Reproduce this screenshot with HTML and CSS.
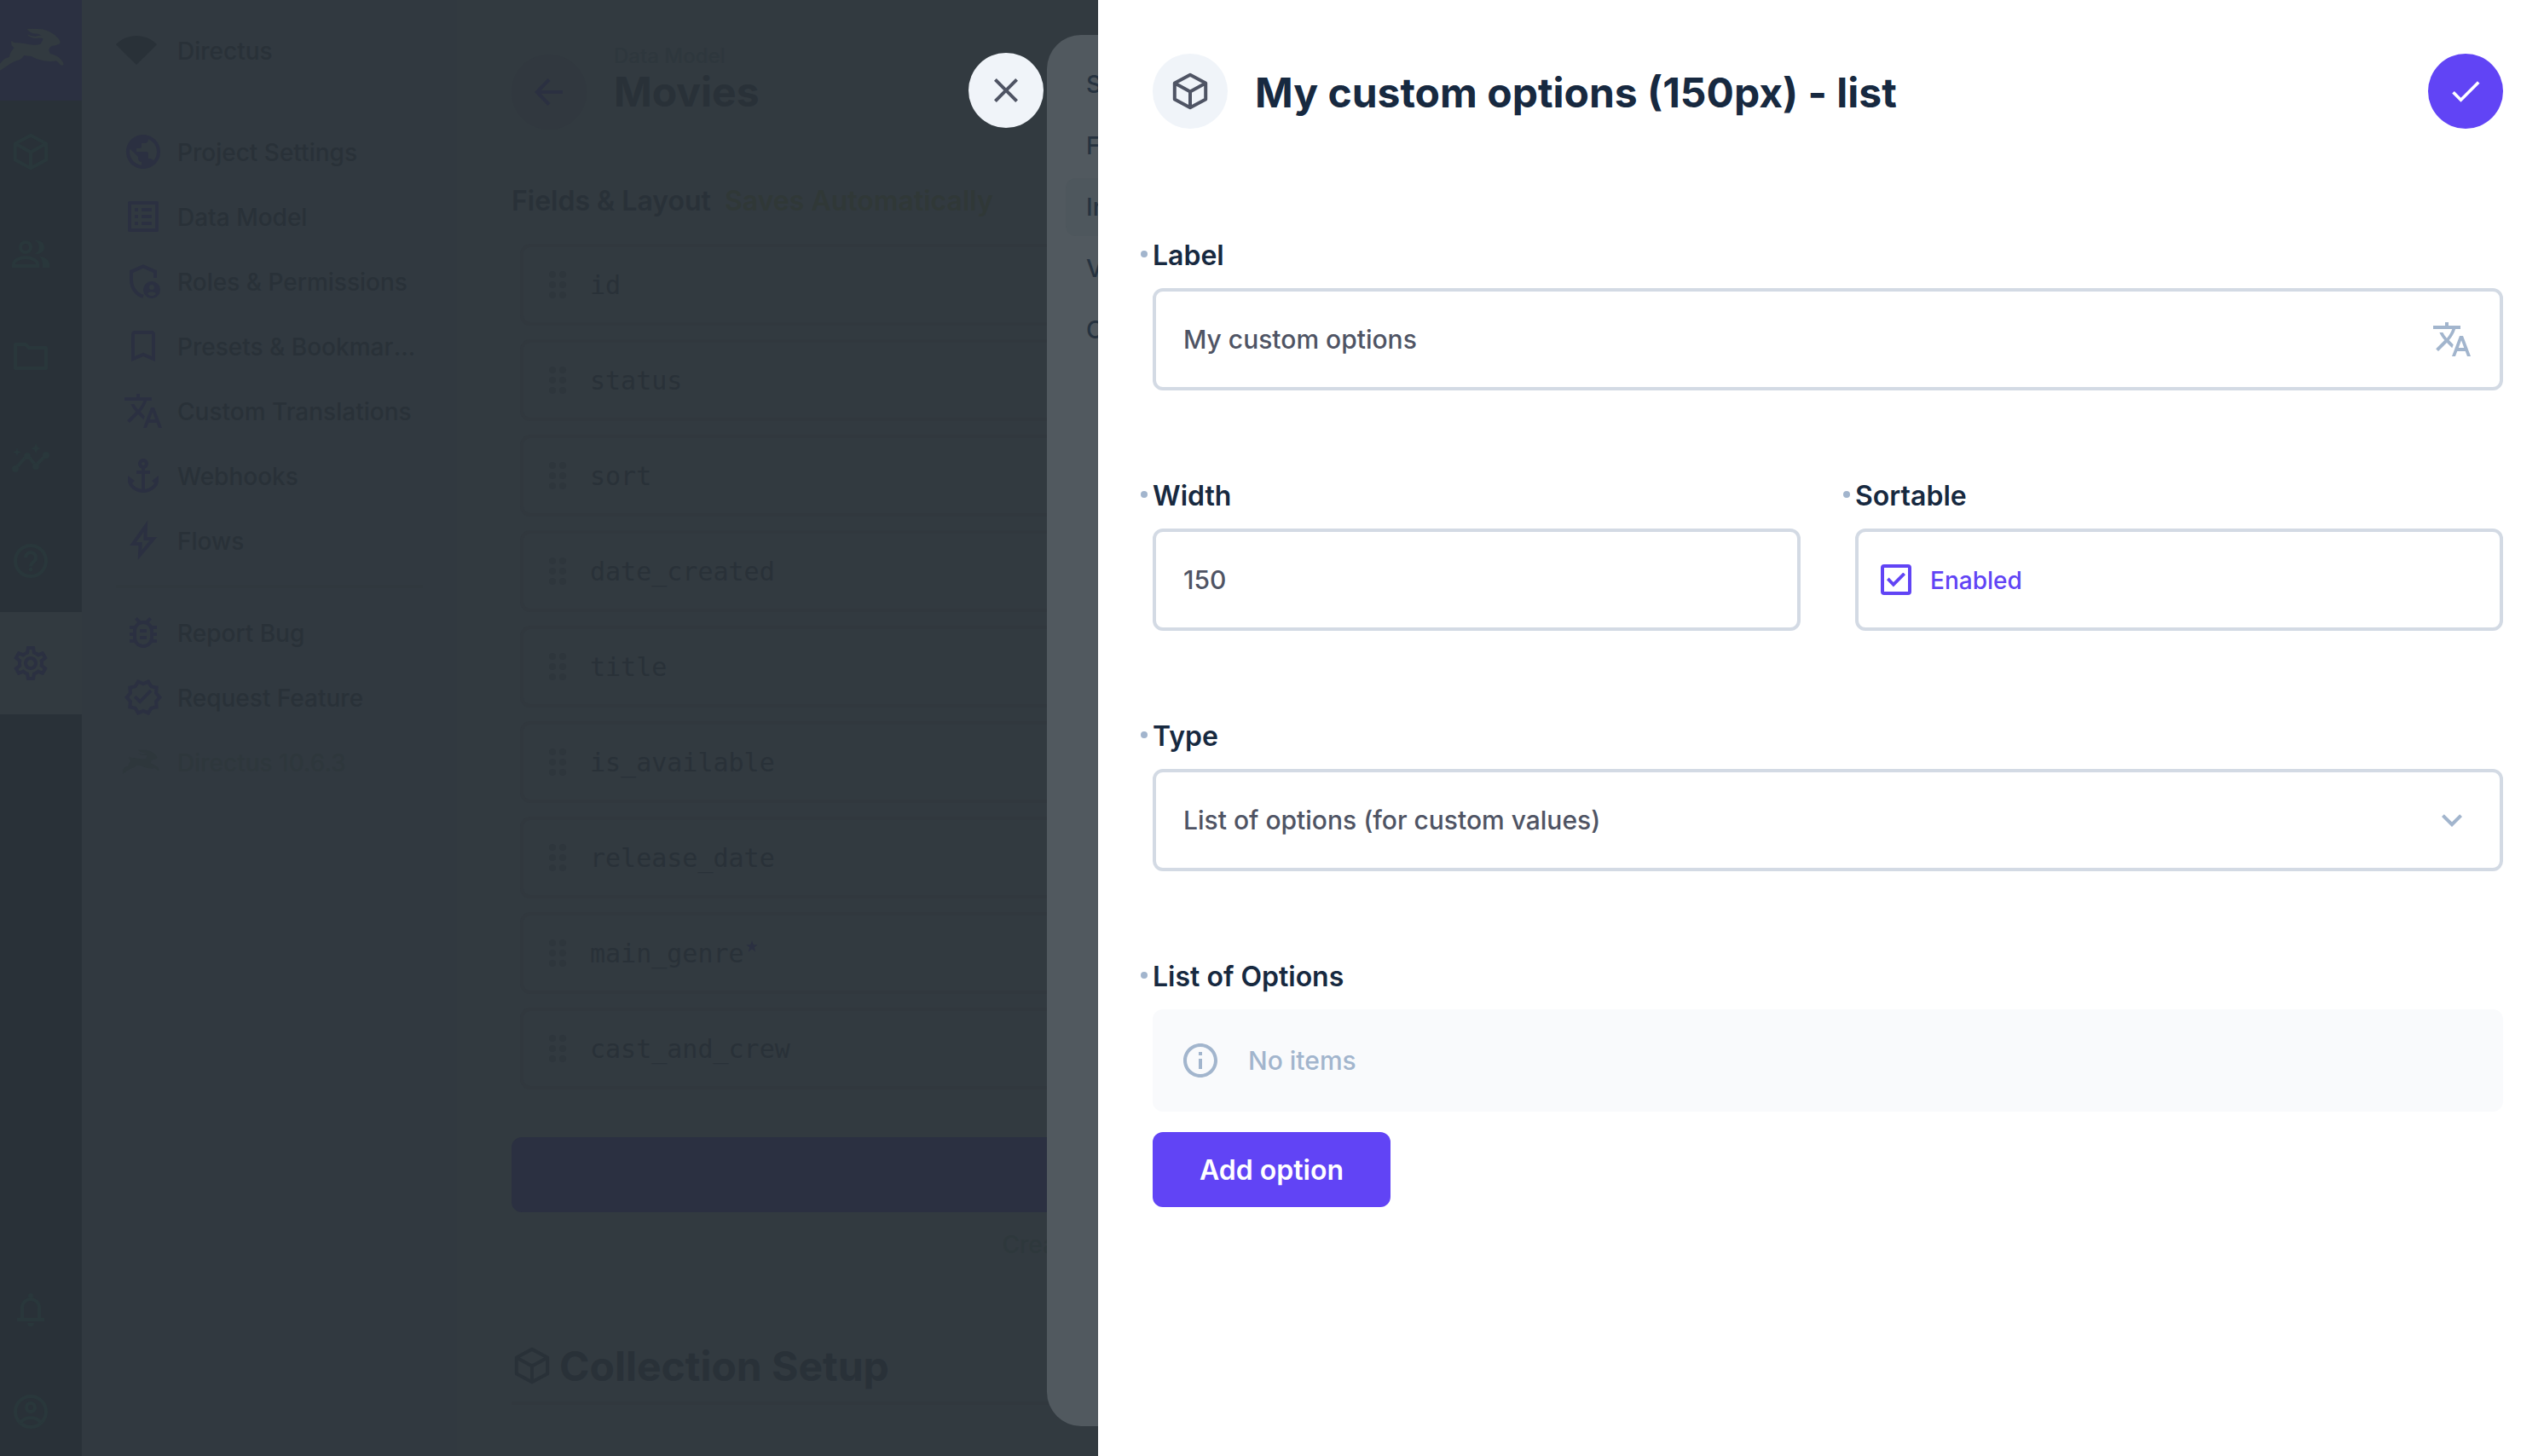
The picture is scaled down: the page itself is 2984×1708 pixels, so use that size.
FILE: index.html
```html
<!DOCTYPE html>
<html lang="en">
<head>
<meta charset="utf-8">
<meta name="viewport" content="width=device-width, initial-scale=1">
<title>Movies · Data Model</title>
<link rel="stylesheet" href="styles.css">
</head>
<body>
<svg class="sprite" aria-hidden="true">
  <symbol id="i-rabbit" viewBox="0 33 252 168"><path d="M95 42Q120 40 150 43Q185 52 205 75Q215 88 210 94Q200 100 182 102Q172 108 172 118L176 128Q192 132 205 140Q224 156 224 168Q218 172 212 168Q204 156 196 154Q180 158 150 153Q130 150 110 138L85 135Q78 146 70 150Q45 156 25 172Q12 182 0 188V165Q10 150 18 146Q28 142 33 140Q36 122 50 108Q36 100 40 83Q46 90 56 91Q76 90 100 96Q124 101 142 95Q150 86 152 76Q142 72 125 75Q105 74 95 61Q110 68 125 68Q140 64 148 65Q135 58 118 58Q102 54 95 42z"/></symbol>
  <symbol id="i-cube" viewBox="0 0 24 24"><path d="M12 2.4 21.1 7.3V16.7L12 21.6 2.9 16.7V7.3zM2.9 7.3 12 12.3 21.1 7.3M12 12.3V21.6" fill="none" stroke="currentColor" stroke-width="2" stroke-linejoin="round"/></symbol>
  <symbol id="i-people" viewBox="0 0 24 24"><g fill="none" stroke="currentColor" stroke-width="2"><circle cx="9" cy="8" r="3"/><path d="M2 19v-1c0-2.700 4.500-4 7-4s7 1.300 7 4v1z"/></g><path d="M14 11.800A4 4 0 0 0 14 4.100c4-.6 6 1.400 6 3.900s-2 4.500-6 3.800zM17 13.200c3 .5 6 2 6 4.800v2h-4v-2c0-2-.8-3.600-2-4.800z"/></symbol>
  <symbol id="i-folder" viewBox="0 0 24 24"><path d="M3 5h6l2 2h10v12H3z" fill="none" stroke="currentColor" stroke-width="2" stroke-linejoin="round"/></symbol>
  <symbol id="i-insights" viewBox="0 0 24 24"><path d="M3 18 10 10 15 16 21 10" fill="none" stroke="currentColor" stroke-width="2"/><circle cx="3" cy="18" r="2"/><circle cx="10" cy="10.500" r="2"/><circle cx="15" cy="16.500" r="2"/><circle cx="21" cy="10" r="2"/><path d="M15 9l.94-2.070L18 6l-2.060-.93L15 3l-.92 2.070L12 6l2.080.93zM4 11l.5-2L6.500 8l-2-.5L4 5l-.5 2.500L1.500 8l2 1z"/></symbol>
  <symbol id="i-help" viewBox="0 0 24 24"><circle cx="12" cy="12" r="9" fill="none" stroke="currentColor" stroke-width="2"/><path d="M9 10a3 3 0 1 1 5 2.300c-1.200 1-2 1.400-2 3" fill="none" stroke="currentColor" stroke-width="2"/><circle cx="12" cy="17" r="1.200"/></symbol>
  <symbol id="i-gear" viewBox="0 0 24 24"><path d="M19.430 12.980c.04-.32.07-.64.07-.98 0-.34-.03-.66-.07-.98l2.110-1.650c.19-.15.24-.42.12-.64l-2-3.460c-.09-.16-.26-.25-.44-.25-.06 0-.12.01-.17.03l-2.490 1c-.52-.4-1.080-.73-1.690-.98l-.38-2.650C14.460 2.180 14.250 2 14 2h-4c-.25 0-.46.18-.49.42l-.38 2.650c-.61.25-1.170.59-1.690.98l-2.490-1c-.06-.02-.12-.03-.18-.03-.17 0-.34.09-.43.25l-2 3.460c-.13.22-.07.49.12.64l2.110 1.650c-.04.32-.07.65-.07.98 0 .33.03.66.07.98l-2.110 1.650c-.19.15-.24.42-.12.64l2 3.460c.09.16.26.25.44.25.06 0 .12-.01.17-.03l2.490-1c.52.4 1.080.73 1.690.98l.38 2.650c.03.24.24.42.49.42h4c.25 0 .46-.18.49-.42l.38-2.650c.61-.25 1.170-.59 1.690-.98l2.490 1c.06.02.12.03.18.03.17 0 .34-.09.43-.25l2-3.460c.12-.22.07-.49-.12-.64l-2.110-1.650zm-1.980-1.710c.04.31.05.52.05.73 0 .21-.02.43-.05.73l-.14 1.130.89.7 1.080.84-.7 1.210-1.270-.51-1.040-.42-.9.68c-.43.32-.84.56-1.250.73l-1.060.43-.16 1.130-.2 1.350h-1.400l-.19-1.350-.16-1.130-1.060-.43c-.43-.18-.83-.41-1.230-.71l-.91-.7-1.060.43-1.270.51-.7-1.210 1.080-.84.89-.7-.14-1.130c-.03-.31-.05-.54-.05-.74s.02-.43.05-.73l.14-1.130-.89-.7-1.080-.84.7-1.210 1.270.51 1.040.42.9-.68c.43-.32.84-.56 1.250-.73l1.060-.43.16-1.130.2-1.350h1.390l.19 1.350.16 1.130 1.060.43c.43.18.83.41 1.230.71l.91.7 1.060-.43 1.270-.51.7 1.210-1.070.85-.89.7.14 1.130zM12 8c-2.210 0-4 1.790-4 4s1.790 4 4 4 4-1.790 4-4-1.790-4-4-4zm0 6c-1.100 0-2-.9-2-2s.9-2 2-2 2 .9 2 2-.9 2-2 2z"/></symbol>
  <symbol id="i-bell" viewBox="0 0 24 24"><path d="M4 18h16M7 18v-7a5 5 0 0 1 10 0v7" fill="none" stroke="currentColor" stroke-width="2"/><circle cx="12" cy="4" r="1.500"/><path d="M10 20h4a2 2 0 0 1-4 0z"/></symbol>
  <symbol id="i-account" viewBox="0 0 24 24"><g fill="none" stroke="currentColor" stroke-width="2"><circle cx="12" cy="12" r="9"/><circle cx="12" cy="9.500" r="2.500"/><path d="M6 18.500c1.500-2 3.500-3 6-3s4.500 1 6 3"/></g></symbol>
  <symbol id="i-fan" viewBox="0 0 24 24"><path d="M12 20.500 0 8.600C6.500 1.800 17.500 1.800 24 8.600z"/></symbol>
  <symbol id="i-globe" viewBox="0 0 24 24"><path d="M12 2C6.480 2 2 6.480 2 12s4.480 10 10 10 10-4.480 10-10S17.520 2 12 2zm-1 17.930c-3.950-.49-7-3.850-7-7.930 0-.62.08-1.210.21-1.790L9 15v1c0 1.100.9 2 2 2v1.930zm6.900-2.540c-.26-.81-1-1.390-1.900-1.390h-1v-3c0-.55-.45-1-1-1H8v-2h2c.55 0 1-.45 1-1V7h2c1.100 0 2-.9 2-2v-.41c2.930 1.190 5 4.060 5 7.410 0 2.080-.8 3.970-2.100 5.390z"/></symbol>
  <symbol id="i-list" viewBox="0 0 24 24"><path d="M19 5v14H5V5h14m1.100-2H3.900c-.5 0-.9.4-.9.9v16.200c0 .4.4.9.9.9h16.200c.4 0 .9-.5.9-.9V3.900c0-.5-.5-.9-.9-.9zM11 7h6v2h-6V7zm0 4h6v2h-6v-2zm0 4h6v2h-6zM7 7h2v2H7zm0 4h2v2H7zm0 4h2v2H7z"/></symbol>
  <symbol id="i-shield" viewBox="0 0 24 24"><path d="M12 20.900C8 19.800 5 15.800 5 11.200V6.300L12 3.200 19 6.300V10" fill="none" stroke="currentColor" stroke-width="2"/><path fill-rule="evenodd" d="M17 12a5 5 0 1 0 0 10 5 5 0 0 0 0-10zm0 2a1.500 1.500 0 1 1 0 3 1.500 1.500 0 0 1 0-3zm0 6.500c-1 0-1.900-.5-2.500-1.300.6-.7 1.500-1.100 2.500-1.100s1.900.4 2.500 1.100c-.6.8-1.500 1.300-2.500 1.300z"/></symbol>
  <symbol id="i-bookmark" viewBox="0 0 24 24"><path d="M17 3H7c-1.100 0-1.990.9-1.990 2L5 21l7-3 7 3V5c0-1.100-.9-2-2-2zm0 15l-5-2.180L7 18V5h10v13z"/></symbol>
  <symbol id="i-translate" viewBox="0 0 24 24"><path d="M12.870 15.070l-2.540-2.510.03-.03c1.740-1.940 2.980-4.170 3.710-6.530H17V4h-7V2H8v2H1v1.990h11.170C11.500 7.920 10.440 9.750 9 11.350 8.070 10.320 7.300 9.190 6.690 8h-2c.73 1.630 1.730 3.170 2.980 4.560l-5.090 5.020L4 19l5-5 3.110 3.110.76-2.040zM18.500 10h-2L12 22h2l1.120-3h4.750L21 22h2l-4.500-12zm-2.620 7l1.620-4.330L19.120 17h-3.240z"/></symbol>
  <symbol id="i-anchor" viewBox="0 0 24 24"><path d="M17 15l1.550 1.550c-.96 1.690-3.330 3.040-5.550 3.370V11h3V9h-3V7.820C14.160 7.400 15 6.300 15 5c0-1.650-1.350-3-3-3S9 3.350 9 5c0 1.300.84 2.400 2 2.820V9H8v2h3v8.920c-2.220-.33-4.590-1.680-5.550-3.370L7 15l-4-3v3c0 3.880 4.920 7 9 7s9-3.120 9-7v-3l-4 3zM12 4c.55 0 1 .45 1 1s-.45 1-1 1-1-.45-1-1 .45-1 1-1z"/></symbol>
  <symbol id="i-bolt" viewBox="0 0 24 24"><path d="M13.500 3.500 6 14h4.300L10 20.500 18 11h-4.800z" fill="none" stroke="currentColor" stroke-width="2"/></symbol>
  <symbol id="i-bug" viewBox="0 0 24 24"><path d="M20 8h-2.810c-.45-.78-1.070-1.450-1.820-1.960L17 4.410 15.590 3l-2.170 2.170C12.960 5.060 12.490 5 12 5s-.96.06-1.410.17L8.410 3 7 4.410l1.620 1.630C7.880 6.550 7.260 7.220 6.810 8H4v2h2.090c-.05.33-.09.66-.09 1v1H4v2h2v1c0 .34.04.67.09 1H4v2h2.810c1.040 1.790 2.970 3 5.190 3s4.150-1.210 5.190-3H20v-2h-2.090c.05-.33.09-.66.09-1v-1h2v-2h-2v-1c0-.34-.04-.67-.09-1H20V8zm-4 4v3c0 2.200-1.800 4-4 4s-4-1.800-4-4v-4c0-2.200 1.800-4 4-4s4 1.800 4 4v1zm-6 2h4v2h-4zm0-4h4v2h-4z"/></symbol>
  <symbol id="i-verified" viewBox="0 0 24 24"><path d="M23 12l-2.440-2.790.34-3.690-3.610-.82-1.890-3.200L12 2.960 8.600 1.500 6.710 4.690 3.100 5.500l.34 3.700L1 12l2.440 2.790-.34 3.700 3.610.82L8.600 22.500l3.400-1.470 3.400 1.460 1.890-3.190 3.610-.82-.34-3.690L23 12zm-4.510 2.110l.26 2.790-2.740.62-1.430 2.410L12 18.820l-2.580 1.110-1.430-2.410-2.740-.62.26-2.800L3.660 12l1.850-2.120-.26-2.780 2.740-.61 1.430-2.410L12 5.180l2.580-1.110 1.430 2.410 2.740.62-.26 2.790L20.340 12l-1.850 2.110zM10.100 13.200 7.800 10.900 6.500 12.200 10.100 15.900 17.200 8.800 15.800 7.400z"/></symbol>
  <symbol id="i-back" viewBox="0 0 24 24"><path d="M20 12H5.500M12 4.700 4.900 12 12 19.300" fill="none" stroke="currentColor" stroke-width="2"/></symbol>
  <symbol id="i-drag" viewBox="0 0 24 24"><circle cx="9" cy="6" r="2"/><circle cx="15" cy="6" r="2"/><circle cx="9" cy="12" r="2"/><circle cx="15" cy="12" r="2"/><circle cx="9" cy="18" r="2"/><circle cx="15" cy="18" r="2"/></symbol>
  <symbol id="i-star" viewBox="0 0 24 24"><path d="M12 1l3 8h8.500l-6.800 5.200L19.200 23 12 17.600 4.800 23l2.500-8.800L.5 9H9z"/></symbol>
  <symbol id="i-close" viewBox="0 0 24 24"><path d="M19 6.410L17.590 5 12 10.590 6.410 5 5 6.410 10.590 12 5 17.590 6.410 19 12 13.410 17.590 19 19 17.590 13.410 12z"/></symbol>
  <symbol id="i-check" viewBox="0 0 24 24"><path d="M9 16.170 4.830 12l-1.420 1.410L9 19 21 7l-1.410-1.410z"/></symbol>
  <symbol id="i-chevron" viewBox="0 0 24 24"><path d="M16.590 8.590 12 13.170 7.410 8.590 6 10l6 6 6-6z"/></symbol>
  <symbol id="i-info" viewBox="0 0 24 24"><path d="M11 7h2v2h-2zm0 4h2v6h-2zm1-9C6.480 2 2 6.480 2 12s4.480 10 10 10 10-4.480 10-10S17.520 2 12 2zm0 18c-4.410 0-8-3.590-8-8s3.590-8 8-8 8 3.590 8 8-3.590 8-8 8z"/></symbol>
</svg>

<div class="app">
  <nav class="rail" aria-label="Modules">
    <a class="rail-logo" href="#" aria-label="Home"><svg><use href="#i-rabbit"/></svg></a>
    <a class="rail-item" href="#" aria-label="Content"><svg class="icon"><use href="#i-cube"/></svg></a>
    <a class="rail-item" href="#" aria-label="Users"><svg class="icon"><use href="#i-people"/></svg></a>
    <a class="rail-item" href="#" aria-label="Files"><svg class="icon"><use href="#i-folder"/></svg></a>
    <a class="rail-item" href="#" aria-label="Insights"><svg class="icon"><use href="#i-insights"/></svg></a>
    <a class="rail-item" href="#" aria-label="Help"><svg class="icon"><use href="#i-help"/></svg></a>
    <a class="rail-item is-active" href="#" aria-label="Settings"><svg class="icon"><use href="#i-gear"/></svg></a>
    <div class="rail-foot">
      <a class="rail-item" href="#" aria-label="Notifications"><svg class="icon"><use href="#i-bell"/></svg></a>
      <a class="rail-item" href="#" aria-label="Account"><svg class="icon"><use href="#i-account"/></svg></a>
    </div>
  </nav>

  <nav class="side" aria-label="Settings">
    <div class="project"><svg class="icon"><use href="#i-fan"/></svg><span>Directus</span></div>
    <ul class="side-list">
      <li><a href="#"><svg class="icon"><use href="#i-globe"/></svg><span>Project Settings</span></a></li>
      <li><a href="#"><svg class="icon"><use href="#i-list"/></svg><span>Data Model</span></a></li>
      <li><a href="#"><svg class="icon"><use href="#i-shield"/></svg><span>Roles &amp; Permissions</span></a></li>
      <li><a href="#"><svg class="icon"><use href="#i-bookmark"/></svg><span>Presets &amp; Bookmarks</span></a></li>
      <li><a href="#"><svg class="icon"><use href="#i-translate"/></svg><span>Custom Translations</span></a></li>
      <li><a href="#"><svg class="icon"><use href="#i-anchor"/></svg><span>Webhooks</span></a></li>
      <li><a href="#"><svg class="icon"><use href="#i-bolt"/></svg><span>Flows</span></a></li>
      <li class="divider" role="separator"></li>
      <li><a href="#"><svg class="icon"><use href="#i-bug"/></svg><span>Report Bug</span></a></li>
      <li><a href="#"><svg class="icon"><use href="#i-verified"/></svg><span>Request Feature</span></a></li>
      <li class="version"><a href="#"><svg class="icon"><use href="#i-rabbit"/></svg><span>Directus 10.6.3</span></a></li>
    </ul>
  </nav>

  <main class="main">
    <header class="main-head">
      <button class="round back" type="button" aria-label="Back"><svg class="icon"><use href="#i-back"/></svg></button>
      <div class="main-title">
        <a href="#">Data Model</a>
        <h1>Movies</h1>
      </div>
    </header>
    <h2 class="section">Fields &amp; Layout <span>Saves Automatically</span></h2>
    <ul class="fields">
      <li><svg class="icon"><use href="#i-drag"/></svg><span>id</span></li>
      <li><svg class="icon"><use href="#i-drag"/></svg><span>status</span></li>
      <li><svg class="icon"><use href="#i-drag"/></svg><span>sort</span></li>
      <li><svg class="icon"><use href="#i-drag"/></svg><span>date_created</span></li>
      <li><svg class="icon"><use href="#i-drag"/></svg><span>title</span></li>
      <li><svg class="icon"><use href="#i-drag"/></svg><span>is_available</span></li>
      <li><svg class="icon"><use href="#i-drag"/></svg><span>release_date</span></li>
      <li><svg class="icon"><use href="#i-drag"/></svg><span>main_genre<svg class="star"><use href="#i-star"/></svg></span></li>
      <li><svg class="icon"><use href="#i-drag"/></svg><span>cast_and_crew</span></li>
    </ul>
    <button class="create" type="button" aria-label="Create Field"></button>
    <a class="advanced" href="#">Create Field in Advanced Mode</a>
    <h2 class="setup"><svg class="icon"><use href="#i-cube"/></svg>Collection Setup</h2>
  </main>
</div>

<aside class="field-drawer" aria-label="Field">
  <ul>
    <li><a href="#">Schema</a></li>
    <li><a href="#">Field</a></li>
    <li><a class="is-active" href="#">Interface</a></li>
    <li><a href="#">Validation</a></li>
    <li><a href="#">Conditions</a></li>
  </ul>
</aside>

<section class="drawer" role="dialog" aria-labelledby="drawer-title">
  <button class="round close" type="button" aria-label="Close"><svg class="icon"><use href="#i-close"/></svg></button>
  <header class="drawer-head">
    <span class="round badge"><svg class="icon"><use href="#i-cube"/></svg></span>
    <h2 id="drawer-title">My custom options (150px) - list</h2>
    <button class="round save" type="button" aria-label="Save"><svg class="icon"><use href="#i-check"/></svg></button>
  </header>
  <form class="form">
    <div class="field full">
      <label class="label" for="label">Label</label>
      <div class="control">
        <input id="label" type="text" value="My custom options">
        <svg class="icon"><use href="#i-translate"/></svg>
      </div>
    </div>
    <div class="field">
      <label class="label" for="width">Width</label>
      <div class="control"><input id="width" type="text" value="150"></div>
    </div>
    <div class="field">
      <span class="label">Sortable</span>
      <label class="control toggle"><input type="checkbox" checked><span>Enabled</span></label>
    </div>
    <div class="field full">
      <label class="label" for="type">Type</label>
      <div class="control">
        <select id="type"><option>List of options (for custom values)</option></select>
        <svg class="icon"><use href="#i-chevron"/></svg>
      </div>
    </div>
    <div class="field full">
      <span class="label">List of Options</span>
      <p class="empty"><svg class="icon"><use href="#i-info"/></svg>No items</p>
      <button class="add" type="button">Add option</button>
    </div>
  </form>
</section>
</body>
</html>
```

FILE: styles.css
```css
:root {
  --ink: #293138;
  --accent-dim: #2b3041;
  --page: #323a40;
  --line: #31383e;
  --purple: #6144f5;
  --muted: #a2b5cd;
  --border: #d3dae4;
  --text: #4f5464;
  --heading: #172940;
}

*, *::before, *::after { box-sizing: border-box; }

body {
  margin: 0;
  height: 100vh;
  overflow: hidden;
  background: var(--page);
  color: var(--ink);
  font-family: Inter, "Liberation Sans", sans-serif;
  font-size: 28px;
  font-weight: 500;
}

h1, h2, p, ul { margin: 0; padding: 0; }
ul { list-style: none; }
a { color: inherit; text-decoration: none; }
button, input, select { font: inherit; color: inherit; border: 0; padding: 0; background: none; }

.sprite { display: none; }
.icon { flex: none; width: 48px; height: 48px; fill: currentColor; }

.round {
  display: flex;
  flex: none;
  align-items: center;
  justify-content: center;
  width: 88px;
  height: 88px;
  border-radius: 50%;
}

/* App behind the overlay */
.app {
  display: grid;
  grid-template-columns: 96px 440px minmax(0, 1fr);
  height: 100%;
  overflow: hidden;
}

.rail {
  display: flex;
  flex-direction: column;
  min-height: 0;
  background: var(--ink);
  color: #29373b;
}
.rail-logo {
  display: flex;
  align-items: center;
  height: 118px;
  background: var(--accent-dim);
  color: #323a40;
}
.rail-logo svg { width: 84px; height: 56px; fill: currentColor; }
.rail-item {
  display: flex;
  flex: none;
  align-items: center;
  height: 120px;
  padding-left: 12px;
}
.rail-item.is-active { background: var(--page); color: var(--accent-dim); }
.rail-foot { margin-top: auto; margin-bottom: -8px; }

.side { background: #313940; }
.side span { padding-top: 2px; }
.project {
  display: flex;
  align-items: center;
  gap: 24px;
  height: 118px;
  padding-left: 40px;
}
.side-list {
  display: flex;
  flex-direction: column;
  gap: 4px;
  padding: 24px 40px 0;
}
.side-list a {
  display: flex;
  align-items: center;
  gap: 16px;
  height: 72px;
  padding: 0 8px;
}
.side-list .icon { color: var(--accent-dim); }
.side-list span { overflow: hidden; text-overflow: ellipsis; white-space: nowrap; }
.side-list .divider {
  height: 28px;
  background: linear-gradient(#30383e, #30383e) center / 100% 4px no-repeat;
}
.side-list .version, .side-list .version .icon { color: #2e373c; }

.main { max-width: 1634px; padding: 52px 0 0 64px; }
.main-head { display: flex; align-items: flex-end; gap: 32px; }
.back { background: #31383f; color: var(--accent-dim); }
.main-title { padding-bottom: 16px; }
.main-title a { display: block; font-size: 24px; line-height: 28px; color: #2e373d; }
.main-title h1 { font-size: 48px; line-height: 56px; font-weight: 700; }
.section { margin-top: 64px; font-size: 32px; line-height: 40px; font-weight: 600; }
.section span { margin-left: 8px; color: #303837; }

.fields {
  display: flex;
  flex-direction: column;
  gap: 16px;
  margin-top: 30px;
  padding: 0 10px;
  font-family: "DejaVu Sans Mono", "Liberation Mono", monospace;
  font-size: 30px;
}
.fields li {
  display: flex;
  align-items: center;
  gap: 14px;
  height: 96px;
  padding-left: 16px;
  border: 4px solid var(--line);
  border-radius: 12px;
}
.fields .icon { color: #2e363c; }
.fields .star { width: 14px; height: 14px; margin-left: 2px; vertical-align: 12px; fill: var(--accent-dim); }

.create {
  display: block;
  width: 100%;
  height: 88px;
  margin-top: 56px;
  border-radius: 12px;
  background: var(--accent-dim);
}
.advanced { display: block; margin-top: 18px; line-height: 40px; text-align: center; color: #2e383c; }
.setup {
  display: flex;
  align-items: center;
  gap: 8px;
  height: 88px;
  margin-top: 80px;
  border-bottom: 4px solid var(--line);
  font-size: 48px;
  font-weight: 700;
}

/* Drawer of the field, under the top one */
.field-drawer {
  position: fixed;
  top: 41px;
  bottom: 35px;
  right: 0;
  left: 1228px;
  padding: 24px 22px;
  border-radius: 40px 0 0 40px;
  background: #51595f;
  color: #263340;
}
.field-drawer a {
  display: block;
  width: 396px;
  margin-bottom: 4px;
  padding-left: 24px;
  border-radius: 12px;
  line-height: 68px;
}
.field-drawer .is-active { background: #4e575d; }

/* Top drawer */
.drawer {
  position: fixed;
  top: 0;
  bottom: 0;
  right: 0;
  left: 1288px;
  padding: 63px 48px 0 64px;
  background: #fff;
  color: var(--text);
}
.close {
  position: absolute;
  top: 62px;
  right: 100%;
  margin-right: 64px;
  background: #f0f4f9;
}
.drawer-head { display: flex; align-items: center; gap: 32px; }
.drawer-head h2 {
  flex: 1;
  padding-top: 4px;
  font-size: 48px;
  line-height: 56px;
  font-weight: 700;
  color: var(--heading);
}
.badge { background: #f0f4f9; }
.save { background: var(--purple); color: #fff; }
.save .icon { width: 44px; height: 44px; }

.form {
  display: grid;
  grid-template-columns: repeat(2, minmax(0, 1fr));
  gap: 104px 64px;
  margin-top: 129px;
  font-size: 30px;
}
.full { grid-column: 1 / -1; }
.label {
  position: relative;
  display: block;
  margin-bottom: 18px;
  font-size: 32px;
  line-height: 40px;
  font-weight: 600;
  color: var(--heading);
}
.label::before {
  content: "";
  position: absolute;
  top: 14px;
  left: -14px;
  width: 8px;
  height: 8px;
  border-radius: 50%;
  background: var(--muted);
}
.control {
  display: flex;
  align-items: center;
  height: 120px;
  padding: 0 32px;
  border: 4px solid var(--border);
  border-radius: 12px;
}
.control input[type="text"], .control select { flex: 1; min-width: 0; height: 100%; outline: 0; }
.control select { appearance: none; }
.control .icon { color: var(--muted); }
.toggle { gap: 22px; padding-left: 26px; font-size: 28px; color: var(--purple); }
.toggle input {
  appearance: none;
  flex: none;
  display: grid;
  place-items: center;
  width: 36px;
  height: 36px;
  margin: 0;
  border: 4px solid var(--purple);
  border-radius: 4px;
}
.toggle input:checked::before {
  content: "";
  width: 22px;
  height: 17px;
  background: var(--purple);
  clip-path: polygon(0 52%, 12% 36%, 36% 68%, 88% 0, 100% 16%, 36% 100%);
}
.toggle span { padding-top: 1px; }
.empty {
  display: flex;
  align-items: center;
  gap: 32px;
  height: 120px;
  padding: 0 32px;
  border-radius: 12px;
  background: #f9fafc;
  color: var(--muted);
}
.add {
  height: 88px;
  margin-top: 24px;
  padding: 0 55px;
  border-radius: 12px;
  background: var(--purple);
  color: #fff;
  font-size: 32px;
  font-weight: 600;
}
```
